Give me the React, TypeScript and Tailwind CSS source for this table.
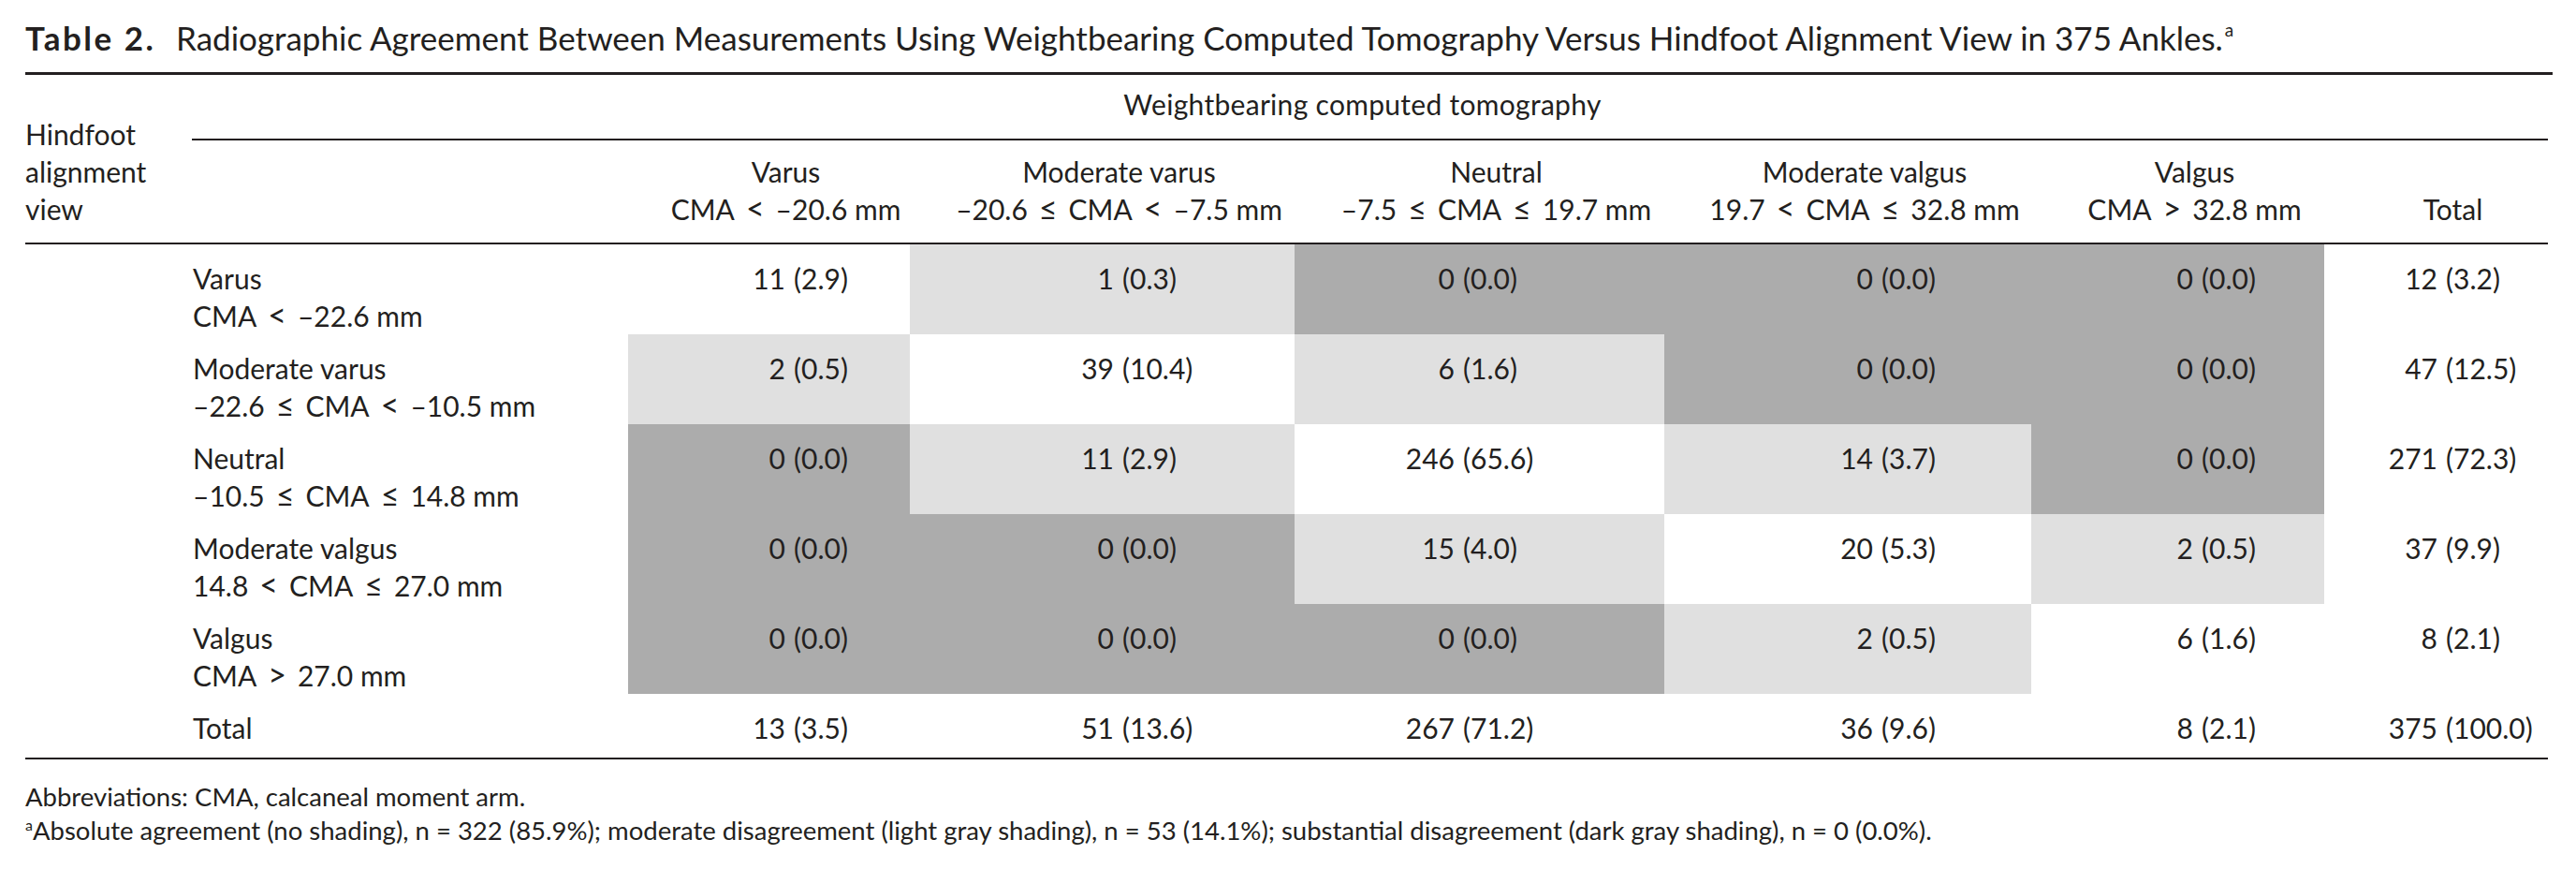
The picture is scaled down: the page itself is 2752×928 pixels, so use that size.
import React from "react";

const heads = [
  { top: "Varus", sub: "CMA < –20.6 mm" },
  { top: "Moderate varus", sub: "–20.6 ≤ CMA < –7.5 mm" },
  { top: "Neutral", sub: "–7.5 ≤ CMA ≤ 19.7 mm" },
  { top: "Moderate valgus", sub: "19.7 < CMA ≤ 32.8 mm" },
  { top: "Valgus", sub: "CMA > 32.8 mm" },
];

const rows = [
  {
    top: "Varus",
    sub: "CMA < –22.6 mm",
    shade: "WLDDD",
    vals: ["11 (2.9)", "1 (0.3)", "0 (0.0)", "0 (0.0)", "0 (0.0)", "12 (3.2)"],
  },
  {
    top: "Moderate varus",
    sub: "–22.6 ≤ CMA < –10.5 mm",
    shade: "LWLDD",
    vals: ["2 (0.5)", "39 (10.4)", "6 (1.6)", "0 (0.0)", "0 (0.0)", "47 (12.5)"],
  },
  {
    top: "Neutral",
    sub: "–10.5 ≤ CMA ≤ 14.8 mm",
    shade: "DLWLD",
    vals: ["0 (0.0)", "11 (2.9)", "246 (65.6)", "14 (3.7)", "0 (0.0)", "271 (72.3)"],
  },
  {
    top: "Moderate valgus",
    sub: "14.8 < CMA ≤ 27.0 mm",
    shade: "DDLWL",
    vals: ["0 (0.0)", "0 (0.0)", "15 (4.0)", "20 (5.3)", "2 (0.5)", "37 (9.9)"],
  },
  {
    top: "Valgus",
    sub: "CMA > 27.0 mm",
    shade: "DDDLW",
    vals: ["0 (0.0)", "0 (0.0)", "0 (0.0)", "2 (0.5)", "6 (1.6)", "8 (2.1)"],
  },
];

const totals = ["13 (3.5)", "51 (13.6)", "267 (71.2)", "36 (9.6)", "8 (2.1)", "375 (100.0)"];

// where the "(" sits, measured from the left edge of each column
const parenAt = ["w-[177px]", "w-[227px]", "w-[180px]", "w-[232px]", "w-[182px]", "w-[130px]"];

const shadeBg: Record<string, string> = {
  W: "bg-white",
  L: "bg-[#e0e0e0]",
  D: "bg-[#acacac]",
};

// the journal sets < ≤ > as wide math signs, Lato's are narrow
function Range({ text }: { text: string }) {
  const parts = text.split(/ ([<>≤]) /);
  return (
    <span>
      {parts.map((p, i) =>
        i % 2 === 1 ? (
          <span key={i} className="mx-[12px] text-[34px] leading-none">
            {p}
          </span>
        ) : (
          <span key={i}>{p}</span>
        )
      )}
    </span>
  );
}

function Value({ value, col }: { value: string; col: number }) {
  const cut = value.indexOf(" ");
  return (
    <div className="flex whitespace-nowrap">
      <span className={`${parenAt[col]} shrink-0 pr-[9px] text-right`}>{value.slice(0, cut)}</span>
      <span>{value.slice(cut + 1)}</span>
    </div>
  );
}

export default function App() {
  return (
    <div className="min-h-[928px] w-[2752px] bg-white pl-[27px] pr-[25px] font-['Lato',sans-serif] text-[#231f20]">
      <div className="whitespace-nowrap pt-[20px] text-[35px] leading-[40px]">
        <span className="inline-block w-[161px] font-bold tracking-[2.5px]">Table 2.</span>
        <span>
          Radiographic Agreement Between Measurements Using Weightbearing Computed Tomography Versus Hindfoot
          Alignment View in 375 Ankles.
        </span>
        <sup className="-top-[15px] ml-[2px] text-[19px]">a</sup>
      </div>
      <div className="mt-[17px] h-[3px] bg-[#231f20]" />

      <div className="mr-[5px] text-[30px] leading-[40px]">
        <div className="grid grid-cols-[178px_466px_301px_411px_395px_392px_313px_239px] border-b-2 border-[#231f20]">
          <div className="row-span-2 flex flex-col justify-end pb-[16px]">
            <span>Hindfoot</span>
            <span>alignment</span>
            <span>view</span>
          </div>
          <div className="col-span-7 border-b-2 border-[#231f20] pb-[17px] pr-[16px] pt-[11px] text-center tracking-[0.3px]">
            Weightbearing computed tomography
          </div>
          <div />
          {heads.map((h) => (
            <div key={h.top} className="flex flex-col whitespace-nowrap pb-[16px] pl-[36px] pt-[13px] text-center">
              <span>{h.top}</span>
              <Range text={h.sub} />
            </div>
          ))}
          <div className="flex flex-col justify-end pb-[16px] pl-[36px] text-center">
            <span>Total</span>
          </div>
        </div>

        <div className="grid grid-cols-[178px_466px_301px_411px_395px_392px_313px_239px] border-b-2 border-[#231f20]">
          {rows.map((r) => (
            <React.Fragment key={r.top}>
              <div />
              <div className="flex h-[96px] flex-col whitespace-nowrap pl-[1px] pt-[16px]">
                <span>{r.top}</span>
                <Range text={r.sub} />
              </div>
              {r.vals.map((v, i) => (
                <div key={i} className={`h-[96px] pt-[16px] ${i < 5 ? shadeBg[r.shade[i]] : ""}`}>
                  <Value value={v} col={i} />
                </div>
              ))}
            </React.Fragment>
          ))}
          <div />
          <div className="h-[68px] pl-[1px] pt-[16px]">Total</div>
          {totals.map((v, i) => (
            <div key={i} className="h-[68px] pt-[16px]">
              <Value value={v} col={i} />
            </div>
          ))}
        </div>
      </div>

      <div className="mt-[22px] whitespace-nowrap text-[27.5px] leading-[36px]">
        <p>Abbreviations: CMA, calcaneal moment arm.</p>
        <p>
          <sup className="-top-[10px] text-[16px]">a</sup>
          Absolute agreement (no shading), n = 322 (85.9%); moderate disagreement (light gray shading), n = 53 (14.1%);
          substantial disagreement (dark gray shading), n = 0 (0.0%).
        </p>
      </div>
    </div>
  );
}
